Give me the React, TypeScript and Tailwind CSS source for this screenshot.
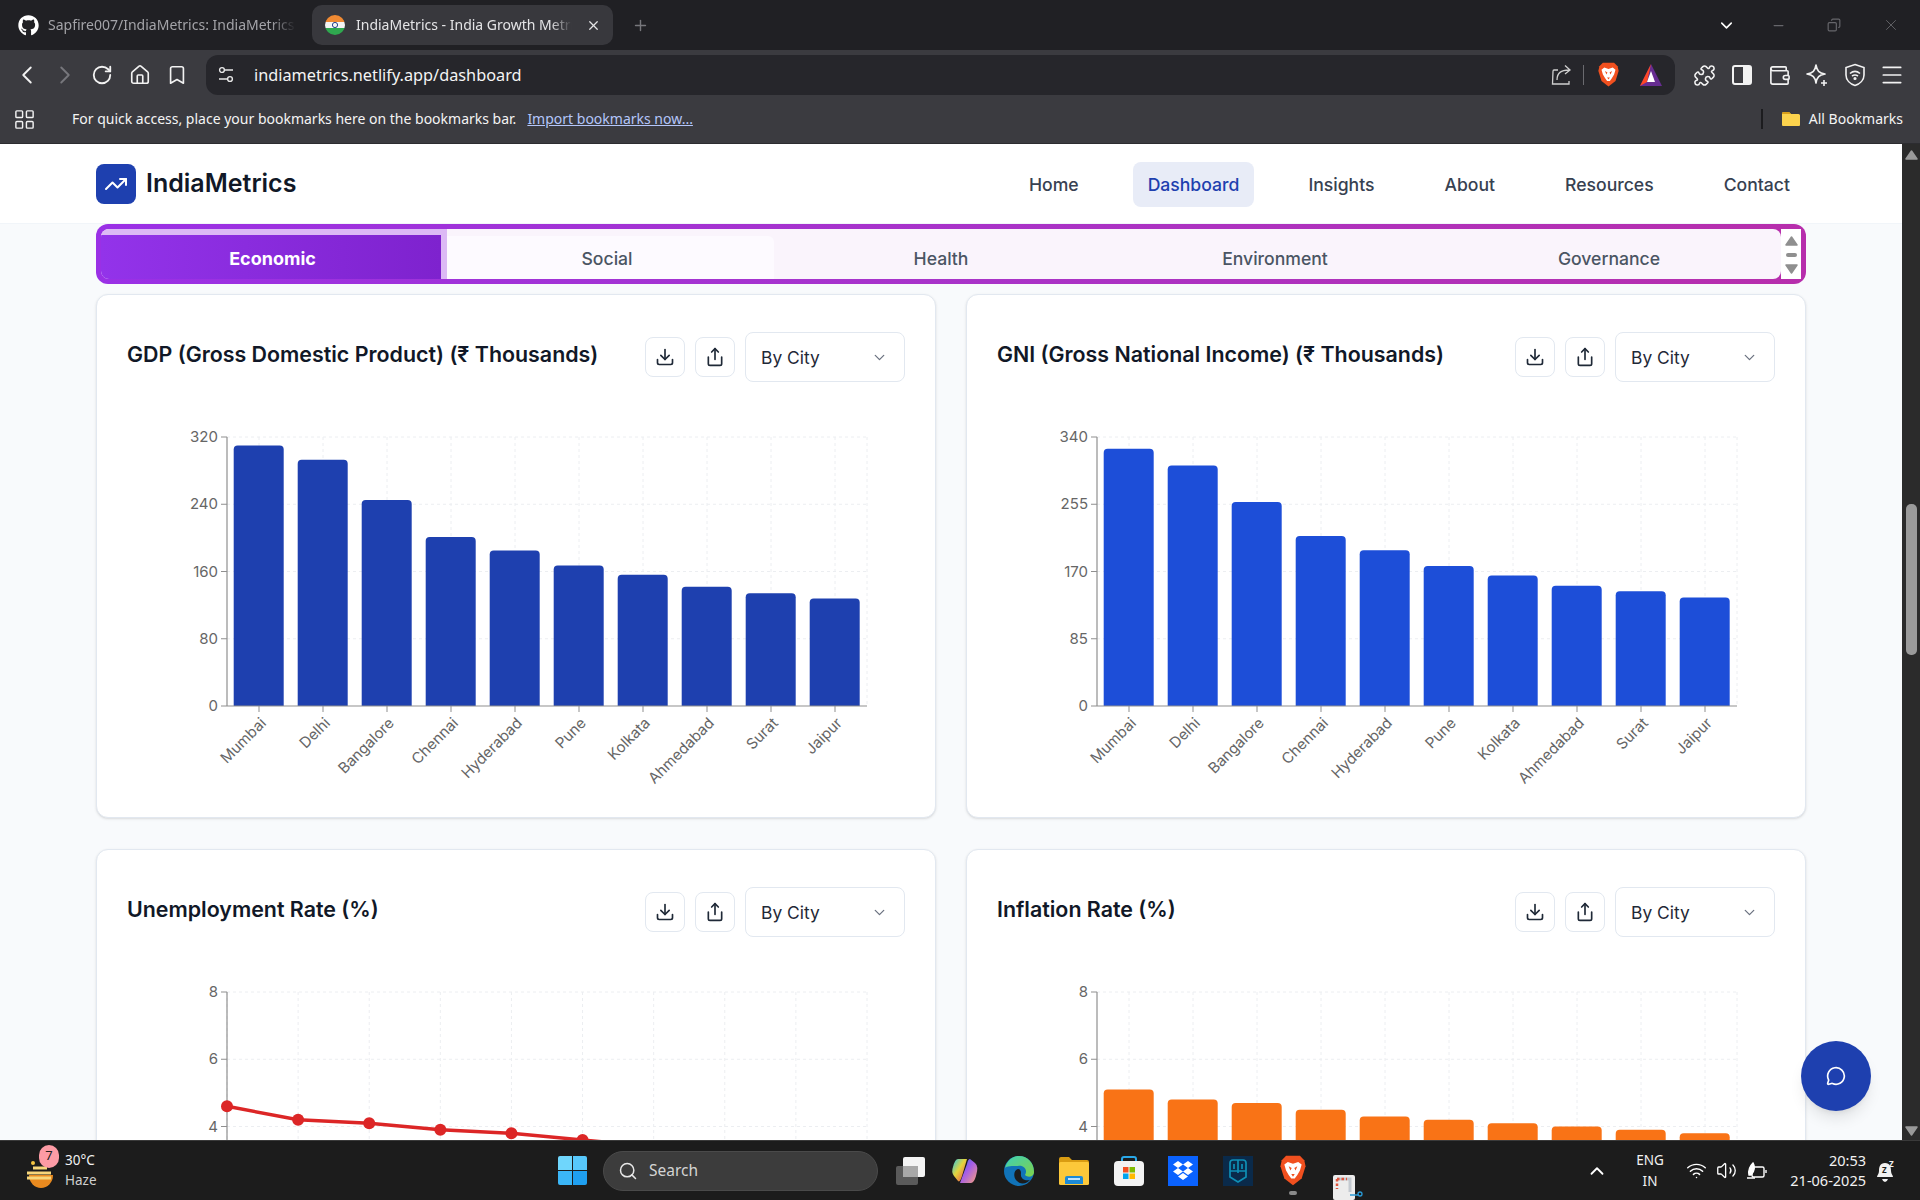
import React from "react";
import { ChevronLeft, ChevronRight, ChevronDown, ChevronUp, House, Bookmark, RotateCw, Download, Share, TrendingUp, MessageCircle, Puzzle, Wallet, Menu, Wifi, Volume2, Search, X, Plus, Minus, Copy, LayoutGrid } from "lucide-react";
import { FaGithub } from "react-icons/fa";

const cities = ["Mumbai", "Delhi", "Bangalore", "Chennai", "Hyderabad", "Pune", "Kolkata", "Ahmedabad", "Surat", "Jaipur"];

type ChartProps = { kind: "bar" | "line"; ticks: number[]; values: number[]; color: string };

function Chart({ kind, ticks, values, color }: ChartProps) {
  const x0 = 100, w = 640, y0 = 37, h = 269;
  const max = ticks[0];
  const yOf = (v: number) => y0 + h - (v / max) * h;
  const band = w / 10;
  const step = w / 9;
  const verticals = kind === "bar"
    ? [...cities.map((_, i) => x0 + band * i + band / 2), x0 + w]
    : [...cities.map((_, i) => x0 + step * i)];
  return (
    <svg width="778" height="400" viewBox="0 0 778 400" className="block" fontFamily="Inter, sans-serif">
      {ticks.filter((t) => t !== 0).map((t) => (
        <line key={t} x1={x0} x2={x0 + w} y1={yOf(t)} y2={yOf(t)} stroke="#eceef1" strokeDasharray="3 3" />
      ))}
      {verticals.map((x, i) => (
        <line key={i} x1={x} x2={x} y1={y0} y2={y0 + h} stroke="#eceef1" strokeDasharray="3 3" />
      ))}
      {kind === "bar" && values.map((v, i) => {
        const x = x0 + band * i + 6.7;
        const y = yOf(v);
        return <path key={i} d={`M${x} ${y0 + h}V${y + 4}Q${x} ${y} ${x + 4} ${y}H${x + 46}Q${x + 50} ${y} ${x + 50} ${y + 4}V${y0 + h}Z`} fill={color} />;
      })}
      <line x1={x0} x2={x0} y1={y0} y2={y0 + h} stroke="#8f8f8f" strokeWidth="1.2" />
      <line x1={x0} x2={x0 + w} y1={y0 + h} y2={y0 + h} stroke="#8f8f8f" strokeWidth="1.2" />
      {ticks.map((t) => (
        <g key={t}>
          <line x1={x0 - 6} x2={x0} y1={yOf(t)} y2={yOf(t)} stroke="#8f8f8f" />
          <text x={x0 - 9} y={yOf(t) + 5} textAnchor="end" fontSize="15" fill="#666">{t}</text>
        </g>
      ))}
      {kind === "bar" && cities.map((c, i) => {
        const x = x0 + band * i + band / 2;
        return (
          <g key={c}>
            <line x1={x} x2={x} y1={y0 + h} y2={y0 + h + 6} stroke="#8f8f8f" />
            <text x={x + 8} y={y0 + h + 18} textAnchor="end" fontSize="15" fill="#666" transform={`rotate(-45 ${x + 8} ${y0 + h + 18})`}>{c}</text>
          </g>
        );
      })}
      {kind === "line" && (
        <>
          <polyline points={values.map((v, i) => `${x0 + step * i},${yOf(v)}`).join(" ")} fill="none" stroke={color} strokeWidth="3.5" />
          {values.map((v, i) => <circle key={i} cx={x0 + step * i} cy={yOf(v)} r="6" fill={color} />)}
        </>
      )}
    </svg>
  );
}

function IconBtn({ children }: { children: React.ReactNode }) {
  return (
    <button className="w-10 h-10 flex items-center justify-center rounded-lg border border-[#e2e8f0] bg-white text-[#1f2937]">
      {children}
    </button>
  );
}

function ChartCard({ title, chart }: { title: string; chart: ChartProps }) {
  return (
    <div className="bg-white border border-[#e2e8f0] rounded-xl shadow-sm pl-[30px] pr-[30px] pt-[37px] h-[524px]">
      <div className="flex items-center justify-between h-[50px]">
        <h3 className="text-[21.4px] leading-7 font-semibold text-[#111827] mb-[6px]">{title}</h3>
        <div className="flex items-center gap-[10px]">
          <IconBtn><Download size={20} strokeWidth={2} /></IconBtn>
          <IconBtn><Share size={20} strokeWidth={2} /></IconBtn>
          <div className="w-[160px] h-[50px] flex items-center justify-between pl-[15px] pr-[16px] rounded-lg border border-[#e2e8f0] bg-white text-[17.4px] text-[#1f2937]">
            <span className="mt-[3px]">By City</span>
            <ChevronDown size={17} className="text-[#6b7280]" strokeWidth={1.8} />
          </div>
        </div>
      </div>
      <div className="mt-[18px]">
        <Chart {...chart} />
      </div>
    </div>
  );
}

function Tri({ down = false, w = 13, h = 10, color = "#8f8f8f" }: { down?: boolean; w?: number; h?: number; color?: string }) {
  return (
    <svg width={w} height={h} viewBox="0 0 13 10" className="block">
      <path d={down ? "M1 1H12L6.5 9Z" : "M1 9H12L6.5 1Z"} fill={color} stroke={color} strokeWidth="1.5" strokeLinejoin="round" />
    </svg>
  );
}

function BraveLion({ size = 24 }: { size?: number }) {
  return (
    <svg width={size} height={size * 1.2} viewBox="0 0 30 36" className="block">
      <path d="M7 1H23L28 6L29.5 13L25 27L15 35L5 27L.5 13L2 6Z" fill="#f1501f" />
      <path d="M9 8L15 10L21 8L25 11L23 18L20 23L17 27H13L10 23L7 18L5 11Z" fill="#fff" />
      <path d="M10 13L13.5 15L12 18ZM20 13L16.5 15L18 18ZM13 22H17L15 25Z" fill="#f1501f" />
    </svg>
  );
}

function Flag() {
  return (
    <svg width="20" height="20" viewBox="0 0 20 20" className="block shrink-0">
      <defs><clipPath id="fc"><circle cx="10" cy="10" r="10" /></clipPath></defs>
      <g clipPath="url(#fc)">
        <rect width="20" height="7" fill="#f08a33" />
        <rect y="7" width="20" height="6" fill="#f4f4f4" />
        <rect y="13" width="20" height="7" fill="#2fa84f" />
        <circle cx="10" cy="10" r="2.6" fill="none" stroke="#27408b" strokeWidth="1" />
      </g>
    </svg>
  );
}

function BrowserTabs() {
  return (
    <div className="h-[50px] bg-[#202024] flex items-center shrink-0">
      <div className="w-[312px] flex items-center pl-[18px]">
        <FaGithub size={21} className="text-white shrink-0" />
        <span className="ml-[9px] -mt-[1px] w-[248px] overflow-hidden whitespace-nowrap text-[14px] text-[#a3a3a8] [mask-image:linear-gradient(to_right,#000_90%,transparent)]">Sapfire007/IndiaMetrics: IndiaMetrics</span>
      </div>
      <div className="w-[301px] h-[40px] bg-[#38383d] rounded-[10px] flex items-center pl-[13px]">
        <Flag />
        <span className="ml-[11px] -mt-[1px] w-[216px] overflow-hidden whitespace-nowrap text-[14px] text-[#e4e4e6] [mask-image:linear-gradient(to_right,#000_90%,transparent)]">IndiaMetrics - India Growth Metrics</span>
        <X size={15} className="ml-[14px] text-[#e4e4e6]" strokeWidth={2} />
      </div>
      <Plus size={17} className="ml-[19px] text-[#77777c]" />
      <div className="ml-auto flex items-center">
        <ChevronDown size={19} className="text-white -translate-x-[1px]" strokeWidth={2} />
        <Minus size={15} className="ml-[34px] text-[#66666b]" />
        <Copy size={14} className="ml-[41px] text-[#66666b] -scale-x-100" />
        <X size={18} className="ml-[41px] mr-[20px] text-[#66666b]" strokeWidth={1.2} />
      </div>
    </div>
  );
}

function Toolbar() {
  const left = [
    <ChevronLeft key="a" size={30} strokeWidth={1.5} className="text-[#f2f2f2]" />,
    <ChevronRight key="b" size={30} strokeWidth={1.5} className="text-[#77777c]" />,
    <RotateCw key="c" size={22} strokeWidth={2} className="text-[#f2f2f2]" />,
    <House key="d" size={22} strokeWidth={1.8} className="text-[#f2f2f2]" />,
    <Bookmark key="e" size={22} strokeWidth={1.8} className="text-[#f2f2f2]" />,
  ];
  return (
    <div className="h-[45px] bg-[#3b3b40] pt-[5px] flex shrink-0">
      <div className="flex items-center pl-[8.5px] h-[40px] w-[206px]">
        {left.map((icon, i) => <div key={i} className="w-[37.5px] flex justify-center">{icon}</div>)}
      </div>
      <div className="w-[1469px] h-[40px] bg-[#26262b] rounded-xl flex items-center pl-[12px] pr-[12px]">
        <svg width="16" height="18" viewBox="0 0 16 18" fill="none" stroke="#e8e8e8" strokeWidth="1.4" className="block">
          <circle cx="4" cy="4" r="2.4" /><path d="M7 4H15M1 13H9" /><circle cx="12" cy="13" r="2.4" />
        </svg>
        <span className="ml-[20px] text-[16.3px] text-[#f4f4f4]">indiametrics.netlify.app/dashboard</span>
        <div className="ml-auto flex items-center">
          <svg width="22" height="24" viewBox="0 0 22 24" fill="none" stroke="#cfcfcf" strokeWidth="1.3" className="mr-[10px] block">
            <path d="M7 7H3Q2 7 2 8.5L1.5 21H18V18" /><path d="M6 17C6 10 10 7 18 7M14 2.5L19 7L14 11" />
          </svg>
          <div className="w-px h-[20px] bg-[#6a6a6f]" />
          <div className="ml-[14px]"><BraveLion size={21} /></div>
          <svg width="24" height="24" viewBox="0 0 24 24" className="ml-[20px] block">
            <path d="M12 1L1 23H23Z" fill="#662d91" />
            <path d="M12 1L1 23L8 19Z" fill="#ff4724" />
            <path d="M12 8L8 19H16Z" fill="#fff" />
          </svg>
        </div>
      </div>
      <div className="flex items-center h-[40px] pl-[11px]">
        <div className="w-[37.5px] flex justify-center"><Puzzle size={23} strokeWidth={1.6} className="text-[#f2f2f2]" /></div>
        <div className="w-[37.5px] flex justify-center">
          <div className="w-[20px] h-[20px] rounded-[3px] border-2 border-[#f2f2f2] flex justify-end"><div className="w-[7px] h-full bg-[#f2f2f2]" /></div>
        </div>
        <div className="w-[37.5px] flex justify-center"><Wallet size={23} strokeWidth={1.7} className="text-[#f2f2f2]" /></div>
        <div className="w-[37.5px] flex justify-center">
          <svg width="24" height="24" viewBox="0 0 24 24" fill="none" stroke="#f2f2f2" strokeWidth="1.6" strokeLinejoin="round"><path d="M11 2C12 8 14 10 20 11C14 12 12 14 11 20C10 14 8 12 2 11C8 10 10 8 11 2Z" /><path d="M19 17V23M16 20H22" /></svg>
        </div>
        <div className="w-[37.5px] flex justify-center">
          <svg width="22" height="24" viewBox="0 0 22 24" fill="none" stroke="#f2f2f2" strokeWidth="1.6"><path d="M11 1.5L20 4.5V12C20 17 16 21 11 22.5C6 21 2 17 2 12V4.5Z" /><path d="M6 10.5C9 8 13 8 16 10.5M8 13C10 11.7 12 11.7 14 13" /><circle cx="11" cy="15.5" r=".8" fill="#f2f2f2" /></svg>
        </div>
        <div className="w-[37.5px] flex justify-center"><Menu size={26} strokeWidth={1.6} className="text-[#f2f2f2]" /></div>
      </div>
    </div>
  );
}

function BookmarksBar() {
  return (
    <div className="h-[49px] bg-[#3b3b40] border-b border-[#2c2c30] flex items-center shrink-0 text-[14px] text-[#f4f4f4]">
      <LayoutGrid size={23} strokeWidth={1.5} className="ml-[13px] text-[#f2f2f2]" />
      <span className="ml-[36px] -mt-[1px]">For quick access, place your bookmarks here on the bookmarks bar.</span>
      <span className="ml-[11px] -mt-[1px] underline text-[#b4c6fa]">Import bookmarks now...</span>
      <div className="ml-auto w-[2px] h-[20px] bg-[#1c1c1f]" />
      <svg width="20" height="16" viewBox="0 0 20 16" className="ml-[18px] block">
        <path d="M1 2.5Q1 1 2.5 1H8L10 3H17.5Q19 3 19 4.5V14Q19 15 18 15H2Q1 15 1 14Z" fill="#fcd34d" />
        <path d="M1 2.5Q1 1 2.5 1H8L10 3H1Z" fill="#d89f1a" />
      </svg>
      <span className="ml-[8px] mr-[17px] -mt-[1px]">All Bookmarks</span>
    </div>
  );
}

function SiteNav() {
  const links = ["Home", "Dashboard", "Insights", "About", "Resources", "Contact"];
  return (
    <div className="h-[80px] bg-white border-b border-[#f1f5f9] px-24 flex items-center justify-between">
      <div className="flex items-center gap-[10px]">
        <div className="w-10 h-10 rounded-lg bg-[#1e40af] flex items-center justify-center">
          <TrendingUp size={24} className="text-white" strokeWidth={2} />
        </div>
        <span className="text-[25px] font-semibold text-[#111827] mt-[1px]">IndiaMetrics</span>
      </div>
      <div className="flex items-center gap-[38px] mt-[1px]">
        {links.map((l) => (
          <div key={l} className={l === "Dashboard" ? "h-[45px] px-[15px] pt-[2px] flex items-center rounded-lg bg-[#e8ecf7] text-[#1e40af] font-medium text-[17.6px]" : "h-[45px] px-[16px] pt-[2px] flex items-center text-[#374151] font-medium text-[17.6px]"}>{l}</div>
        ))}
      </div>
    </div>
  );
}

function MetricTabs() {
  return (
    <div className="mx-24 h-[60px] rounded-xl p-[5px] flex bg-gradient-to-r from-[#9a30e6] to-[#b72eac]">
      <div className="flex flex-1 bg-[#faf4fc] rounded-lg overflow-hidden text-[17.6px] font-medium text-[#4b5563]">
        <div className="w-[346px] pt-[2px] pl-[3px] flex items-center justify-center border-t-[6px] border-r-[6px] border-[#dcb9f5] bg-gradient-to-r from-[#9333ea] to-[#7e22ce] text-white font-bold text-[18px]">Economic</div>
        <div className="w-[327px] mt-[7px] pt-[3px] flex items-center justify-center bg-[#fdfaff] rounded-tr-md pr-[7px]">Social</div>
        <div className="w-[334px] mt-[7px] pt-[3px] flex items-center justify-center">Health</div>
        <div className="w-[334px] mt-[7px] pt-[3px] flex items-center justify-center">Environment</div>
        <div className="w-[334px] mt-[7px] pt-[3px] flex items-center justify-center">Governance</div>
      </div>
      <div className="w-[20px] bg-white flex flex-col items-center pt-[7px]">
        <Tri />
        <div className="w-[11px] h-[4px] rounded-full bg-[#8f8f8f] mt-[7px]" />
        <div className="mt-[7px]"><Tri down /></div>
      </div>
    </div>
  );
}

function PageScrollbar() {
  return (
    <div className="w-[18px] bg-[#2b2b2b] flex flex-col items-center pt-[6px] shrink-0">
      <Tri color="#9a9a9a" />
      <div className="w-[11px] h-[151px] rounded-[5px] bg-[#9b9b9b] mt-[344px]" />
      <div className="mt-auto mb-[4px]"><Tri down color="#9a9a9a" /></div>
    </div>
  );
}

function Taskbar() {
  return (
    <div className="h-[60px] bg-[#1c1c1c] border-t border-[#3a3a3a] flex shrink-0 font-[Noto_Sans,sans-serif] text-[#f2f2f2]">
      <div className="w-[558px] flex items-center pl-[25px]">
        <div className="relative w-[30px] h-[36px] flex items-end">
          <svg width="30" height="30" viewBox="0 0 30 30" className="block">
            <path d="M4 16H28A12 13 0 0 1 4 16Z" fill="#e98a1f" />
            <circle cx="8" cy="4" r="2" fill="#f5c542" />
            <path d="M8 9H22M2 14H26M2 19H26" stroke="#f7d67a" strokeWidth="3" />
          </svg>
          <div className="absolute left-[14px] -top-[8px] w-[20px] h-[23px] rounded-full bg-[#fd9ba5] flex items-center justify-center text-[13px] text-[#222]">7</div>
        </div>
        <div className="ml-[10px] text-[13.5px] leading-[20px] -mt-[1px]">
          <div>30°C</div>
          <div className="text-[#cfcfcf]">Haze</div>
        </div>
      </div>
      <div className="flex items-center">
        <div className="grid grid-cols-2 gap-[1px] w-[29px] h-[29px]">
          <div className="bg-[#6fd6fc] rounded-tl-[2px]" /><div className="bg-[#57c8fb] rounded-tr-[2px]" />
          <div className="bg-[#3bb6f7] rounded-bl-[2px]" /><div className="bg-[#1f9ff0] rounded-br-[2px]" />
        </div>
        <div className="ml-[16px] w-[275px] h-[40px] rounded-full bg-[#3c3c3c] border border-[#4a4a4a] flex items-center pl-[14px] text-[#d4d4d4] text-[15.5px]">
          <Search size={20} strokeWidth={1.8} className="text-[#e8e8e8]" />
          <span className="ml-[11px]">Search</span>
        </div>
        <div className="ml-[17px] flex items-center gap-[24.7px]">
          <svg width="30" height="30" viewBox="0 0 30 30" className="block">
            <rect x="1" y="10" width="22" height="19" rx="2" fill="#5a5a5a" />
            <rect x="8" y="1" width="22" height="20" rx="2" fill="#f4f4f4" />
            <rect x="8" y="10" width="15" height="11" fill="#a8a8a8" />
          </svg>
          <svg width="30" height="30" viewBox="0 0 30 30" className="block">
            <defs>
              <linearGradient id="cp1" x1="0" y1="0" x2="1" y2="1"><stop offset="0" stopColor="#2f6fe8" /><stop offset=".45" stopColor="#a45de8" /><stop offset="1" stopColor="#f8a07a" /></linearGradient>
              <linearGradient id="cp2" x1="0" y1="0" x2="1" y2="1"><stop offset="0" stopColor="#26c6e8" /><stop offset=".45" stopColor="#e3d43d" /><stop offset="1" stopColor="#ee3f4b" /></linearGradient>
            </defs>
            <path d="M10 27H21Q24 27 26 20Q29 10 25 7L20 3Q18 3 17 8Z" fill="url(#cp1)" />
            <path d="M8 3H17L12 20Q10 27 8 25L4 20Q1 16 3 11Q5 3 8 3Z" fill="url(#cp2)" />
          </svg>
          <svg width="30" height="30" viewBox="0 0 30 30" className="block">
            <defs><linearGradient id="ed" x1="0" y1="0" x2="1" y2="1"><stop offset="0" stopColor="#3fd1b4" /><stop offset="1" stopColor="#7fd14a" /></linearGradient></defs>
            <circle cx="15" cy="15" r="15" fill="#1173b8" />
            <path d="M1 12C3 4 9 0 15 0C24 0 30 7 30 16C30 21 24 22 21 19C24 14 20 9 14 10C8 10 3 10 1 12Z" fill="url(#ed)" />
            <path d="M14 13C10 14 9 20 12 24C17 30 23 27 26 24C21 25 16 23 17 17C17 15 16 13 14 13Z" fill="#1c1c1c" />
          </svg>
          <svg width="30" height="28" viewBox="0 0 30 28" className="block">
            <path d="M0 2Q0 0 2 0H10L13 3H28Q30 3 30 5V10H0Z" fill="#d99c12" />
            <rect y="5" width="30" height="23" rx="1.5" fill="#fcc83a" />
            <path d="M6 27V21Q6 19 8 19H22Q24 19 24 21V27" fill="#1c8ad6" />
            <rect x="9" y="21" width="12" height="2" fill="#bfe3ff" />
          </svg>
          <svg width="30" height="30" viewBox="0 0 30 30" className="block">
            <path d="M8 7V3Q8 1 10 1H20Q22 1 22 3V7" fill="none" stroke="#29a8e8" strokeWidth="2" />
            <rect y="5" width="30" height="25" rx="4" fill="#f3f3f3" />
            <rect x="9" y="11" width="5.5" height="5.5" fill="#f25022" />
            <rect x="15.5" y="11" width="5.5" height="5.5" fill="#7fba00" />
            <rect x="9" y="17.5" width="5.5" height="5.5" fill="#00a4ef" />
            <rect x="15.5" y="17.5" width="5.5" height="5.5" fill="#ffb900" />
          </svg>
          <svg width="30" height="30" viewBox="0 0 30 30" className="block">
            <rect width="30" height="30" fill="#0a62fe" />
            <path d="M10 5L15 8.5L10 12L5 8.5ZM20 5L25 8.5L20 12L15 8.5ZM10 12L15 15.5L10 19L5 15.5ZM20 12L25 15.5L20 19L15 15.5ZM15 17L20 20.5L15 24L10 20.5Z" fill="#fff" />
          </svg>
          <svg width="30" height="30" viewBox="0 0 30 30" className="block" fill="none" stroke="#0f8fb5" strokeWidth="1.7">
            <rect width="30" height="30" fill="#0a2a4a" stroke="none" />
            <path d="M7 7Q7 4 10 4H20Q23 4 23 7V21L15 26L7 21ZM15 4V17M7 15H23M11 8V13M19 8V13" />
          </svg>
          <div className="relative w-[30px] flex justify-center">
            <BraveLion size={26} />
            <div className="absolute -bottom-[9px] w-[8px] h-[4px] rounded-full bg-[#8a8a8a]" />
          </div>
        </div>
        <div className="ml-[25px] mt-[34px] self-start">
          <svg width="30" height="25" viewBox="0 0 30 25" className="block">
            <rect x="0" y="0" width="22" height="25" rx="2" fill="#ececec" />
            <path d="M4 4H17V17" fill="none" stroke="#c3c9d0" strokeWidth="3" />
            <path d="M4 4H14M4 4V14" fill="none" stroke="#e0553d" strokeWidth="2.5" strokeDasharray="2.5 2" />
            <path d="M17 20L26 20" stroke="#2a9ad6" strokeWidth="1.5" />
            <circle cx="27" cy="19" r="2" fill="none" stroke="#2a9ad6" strokeWidth="1.3" />
          </svg>
        </div>
      </div>
      <div className="ml-auto flex items-center pr-[24px]">
        <ChevronUp size={22} strokeWidth={2} className="text-white" />
        <div className="ml-[22px] w-[40px] text-center text-[13.5px] leading-[21px]">
          <div>ENG</div>
          <div>IN</div>
        </div>
        <Wifi size={21} strokeWidth={1.7} className="ml-[16px] text-white" />
        <Volume2 size={21} strokeWidth={1.5} className="ml-[9px] text-white" />
        <svg width="21" height="20" viewBox="0 0 21 20" fill="none" stroke="#fff" strokeWidth="1.4" className="ml-[9px] block">
          <rect x="6" y="6" width="12" height="10" rx="1.5" /><path d="M20 9V12" /><path d="M1 17H9M3 14C2 9 4 5 7 2C9 5 9 10 5 14Z" fill="#fff" />
        </svg>
        <div className="ml-[13px] w-[86px] text-right text-[14.5px] leading-[20px] -mt-[2px]">
          <div>20:53</div>
          <div>21-06-2025</div>
        </div>
        <svg width="22" height="24" viewBox="0 0 22 24" className="ml-[8px] block">
          <path d="M11 4C6 4 5 8 5 12C5 15 3 16 3 18H19C19 16 17 15 17 12C17 8 16 4 11 4ZM8 20H14Q13 23 11 23Q9 23 8 20Z" fill="#f2f2f2" />
          <text x="8" y="14" fontSize="8" fill="#1c1c1c" fontWeight="700" fontFamily="Noto Sans, sans-serif">Z</text>
          <text x="15" y="8" fontSize="8" fill="#f2f2f2" fontWeight="700" fontFamily="Noto Sans, sans-serif">Z</text>
        </svg>
      </div>
    </div>
  );
}

export default function App() {
  return (
    <div className="w-[1920px] h-[1200px] overflow-hidden flex flex-col font-[Inter,sans-serif]">
      <div className="font-[Noto_Sans,sans-serif] shrink-0">
        <BrowserTabs />
        <Toolbar />
        <BookmarksBar />
      </div>
      <div className="flex flex-1 min-h-0">
        <div className="flex-1 min-w-0 bg-[#f8fafc] overflow-hidden relative">
          <SiteNav />
          <MetricTabs />
          <div className="mx-24 mt-[10px] grid grid-cols-2 gap-x-[30px] gap-y-[31px]">
            <ChartCard title="GDP (Gross Domestic Product) (₹ Thousands)" chart={{ kind: "bar", ticks: [320, 240, 160, 80, 0], values: [310, 293, 245, 201, 185, 167, 156, 142, 134, 128], color: "#1e40af" }} />
            <ChartCard title="GNI (Gross National Income) (₹ Thousands)" chart={{ kind: "bar", ticks: [340, 255, 170, 85, 0], values: [325, 304, 258, 215, 197, 177, 165, 152, 145, 137], color: "#1d4ed8" }} />
            <ChartCard title="Unemployment Rate (%)" chart={{ kind: "line", ticks: [8, 6, 4, 2, 0], values: [4.6, 4.2, 4.1, 3.9, 3.8, 3.6, 3.4, 3.2, 3.1, 3.0], color: "#dc2626" }} />
            <ChartCard title="Inflation Rate (%)" chart={{ kind: "bar", ticks: [8, 6, 4, 2, 0], values: [5.1, 4.8, 4.7, 4.5, 4.3, 4.2, 4.1, 4.0, 3.9, 3.8], color: "#f97316" }} />
          </div>
          <button className="absolute left-[1801px] top-[897px] w-[70px] h-[70px] rounded-full bg-[#1e40af] shadow-lg flex items-center justify-center">
            <MessageCircle size={20} className="text-white" strokeWidth={2} />
          </button>
        </div>
        <PageScrollbar />
      </div>
      <Taskbar />
    </div>
  );
}
